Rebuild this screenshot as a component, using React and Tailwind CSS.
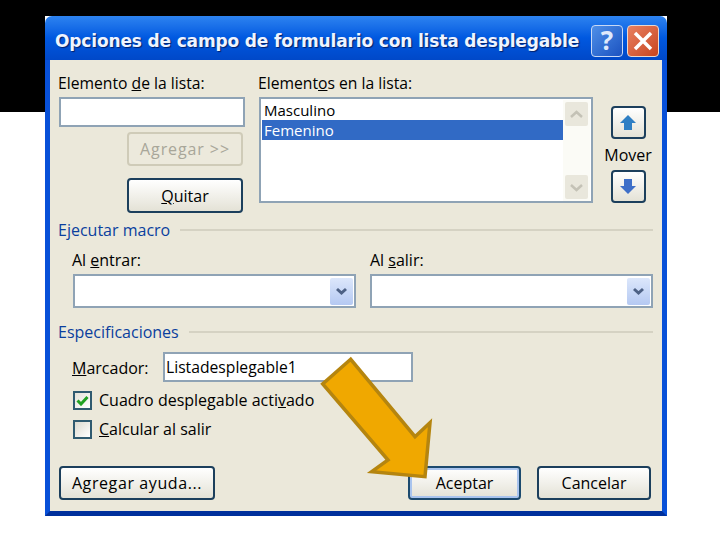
const FONT = "font-['Open_Sans','Liberation_Sans',sans-serif]";

function XpButton({ children, className = "", disabled = false, focused = false }) {
  return (
    <button
      className={`flex items-center justify-center rounded-[4px] border-2 text-[16px] ${
        disabled
          ? "border-[#cfcbb8] bg-[#ece9dc] text-[#a8a699]"
          : focused
            ? "border-[#1c4a6e] bg-gradient-to-b from-white to-[#e4e2d6] text-black shadow-[inset_0_0_0_2px_#a9c4ee]"
            : "border-[#1c3f5c] bg-gradient-to-b from-white to-[#e4e2d6] text-black"
      } ${className}`}
    >
      {children}
    </button>
  );
}

function SectionTitle({ children }) {
  return (
    <div className="flex h-[20px] items-center gap-[10px] pr-[9px]">
      <span className="text-[16px] text-[#0a3f9e]">{children}</span>
      <span className="h-[2px] flex-1 bg-[#d5d2c3]" />
    </div>
  );
}

function Combo({ className = "" }) {
  return (
    <div className={`flex h-[34px] w-[283px] items-center justify-end border-2 border-[#8fa3b5] bg-white pr-[1px] ${className}`}>
      <span className="flex h-[27px] w-[23px] items-center justify-center rounded-[2px] bg-gradient-to-b from-[#dce7fb] to-[#b5c9f2]">
        <svg width="13" height="9" viewBox="0 0 13 9">
          <path d="M2 2 L6.5 6 L11 2" fill="none" stroke="#4d6185" strokeWidth="3" />
        </svg>
      </span>
    </div>
  );
}

function ScrollBtn({ up }) {
  return (
    <span className="flex h-[24px] w-[23px] items-center justify-center rounded-[2px] bg-[#e9e7dc]">
      <svg width="15" height="9" viewBox="0 0 15 9">
        <path d={up ? "M2 7 L7.5 2 L13 7" : "M2 2 L7.5 7 L13 2"} fill="none" stroke="#c4c2b6" strokeWidth="2.5" />
      </svg>
    </span>
  );
}

function MoveButton({ up }) {
  return (
    <button className="flex h-[33px] w-[35px] shrink-0 items-center justify-center rounded-[4px] border-2 border-[#1c3f5c] bg-gradient-to-b from-white to-[#e4e2d6]">
      <svg width="18" height="17" viewBox="0 0 18 17">
        <path
          d={up ? "M9 1 L17 9 H13 V16 H5 V9 H1 Z" : "M5 1 H13 V8 H17 L9 16 L1 8 H5 Z"}
          fill={up ? "#2f7fc4" : "#3e6fc8"}
        />
      </svg>
    </button>
  );
}

export default function App() {
  return (
    <div className={`relative h-[540px] w-[720px] overflow-hidden bg-white pl-[45px] pt-[16px] ${FONT}`}>
      <div className="absolute inset-x-0 top-0 h-[112px] bg-black" />

      <div className="relative h-[500px] w-[622px] bg-white">
        {/* Title bar */}
        <div className="flex h-[44px] items-center rounded-t-[7px] bg-gradient-to-b from-[#2d83f0] via-[#0058e0] to-[#0048c8] pl-[10px] pr-[8px] pt-[5px]">
          <span className="min-w-0 flex-1 whitespace-nowrap pt-[3px] font-['DejaVu_Sans'] text-[17px] font-bold tracking-[-0.15px] text-[#eef4ff] [text-shadow:1px_1px_1px_#00206a]">
            Opciones de campo de formulario con lista desplegable
          </span>
          <span className="mr-[4px] flex h-[32px] w-[32px] shrink-0 items-center justify-center rounded-[4px] border border-[#c8d8f5] bg-gradient-to-br from-[#4f8fe8] to-[#1c52c0] text-[26px] font-bold text-[#dfe9fb]">
            ?
          </span>
          <span className="flex h-[32px] w-[32px] shrink-0 items-center justify-center rounded-[4px] border border-[#e8d8d0] bg-gradient-to-br from-[#e88060] to-[#c8441c]">
            <svg width="22" height="22" viewBox="0 0 22 22">
              <path d="M3 3 L19 19 M19 3 L3 19" stroke="#fff" strokeWidth="3.5" />
            </svg>
          </span>
        </div>

        {/* Client area */}
        <div className="h-[456px] border-x-[5px] border-b-[5px] border-x-[#0850d8] border-b-[#00309c] bg-[#ebe8da] pl-[8px] pt-[14px] text-[16px] text-black">
          <div className="flex h-[143px]">
            <div className="w-[200px]">
              <div className="h-[23px] text-[15.7px] leading-[18px]">Elemento <u>d</u>e la lista:</div>
              <div className="ml-[1px] h-[30px] w-[186px] border-2 border-[#8fa3b5] bg-white" />
              <XpButton disabled className="ml-[69px] mt-[5px] h-[34px] w-[116px] tracking-[0.9px]">Agregar &gt;&gt;</XpButton>
              <XpButton className="ml-[69px] mt-[12px] h-[35px] w-[116px]"><u>Q</u>uitar</XpButton>
            </div>

            <div className="w-[347px]">
              <div className="h-[23px] text-[15.7px] leading-[18px]">Elemen<span>t</span><u>o</u>s en la lista:</div>
              <div className="ml-[1px] flex h-[106px] w-[334px] border-2 border-[#8fa3b5] bg-white pl-[1px] pt-[1px]">
                <div className="w-[301px] text-[15px] leading-[20px]">
                  <div className="h-[20px] pl-[2px]">Masculino</div>
                  <div className="h-[20px] bg-[#316ac5] pl-[2px] text-white">Femenino</div>
                </div>
                <div className="flex w-[27px] flex-col justify-between bg-[#fbfbf6] px-[2px] py-[2px]">
                  <ScrollBtn up />
                  <ScrollBtn />
                </div>
              </div>
            </div>

            <div className="flex w-[46px] flex-col items-center pt-[32px]">
              <MoveButton up />
              <div className="flex h-[31px] items-center">Mover</div>
              <MoveButton />
            </div>
          </div>

          <div className="mt-[3px]"><SectionTitle>Ejecutar macro</SectionTitle></div>

          <div className="mt-[10px] flex pl-[14px]">
            <div className="w-[298px]">
              <div className="h-[24px] leading-[20px]">Al <u>e</u>ntrar:</div>
              <Combo className="ml-[1px]" />
            </div>
            <div>
              <div className="h-[24px] leading-[20px]">Al <u>s</u>alir:</div>
              <Combo />
            </div>
          </div>

          <div className="mt-[14px]"><SectionTitle>Especificaciones</SectionTitle></div>

          <div className="mt-[10px] flex h-[30px] items-center pl-[14px]">
            <span className="w-[91px] pt-[2px]"><u>M</u>arcador:</span>
            <div className="flex h-[30px] w-[250px] items-center border-2 border-[#8fa3b5] bg-white pl-[1px] pt-[2px] text-[15.7px]">Listadesplegable1</div>
          </div>

          <div className="ml-[15px] mt-[8px] flex h-[20px] items-center gap-[7px]">
            <span className="flex h-[19px] w-[19px] items-center justify-center border-2 border-[#2f5a70] bg-gradient-to-br from-[#e4e2d8] to-white">
              <svg width="13" height="11" viewBox="0 0 13 11">
                <path d="M1.5 5.5 L5 9 L11.5 2" fill="none" stroke="#21a121" strokeWidth="3" />
              </svg>
            </span>
            <span>Cuadro desplegable acti<u>v</u>ado</span>
          </div>
          <div className="ml-[15px] mt-[9px] flex h-[20px] items-center gap-[7px]">
            <span className="h-[19px] w-[19px] border-2 border-[#2f5a70] bg-gradient-to-br from-[#dcdad0] to-white" />
            <span><u>C</u>alcular al salir</span>
          </div>

          <div className="mt-[27px] flex pl-[1px]">
            <XpButton className="h-[34px] w-[156px] tracking-[0.6px]">A<u>g</u>regar ayuda...</XpButton>
            <XpButton focused className="ml-[193px] h-[34px] w-[113px]">Aceptar</XpButton>
            <XpButton className="ml-[16px] h-[34px] w-[114px]">Cancelar</XpButton>
          </div>
        </div>
      </div>

      {/* Callout arrow over the dialog */}
      <svg className="absolute left-0 top-0" width="720" height="540" viewBox="0 0 720 540">
        <path
          d="M350.7 359.3 L322.7 384 L388 460 L371.7 471.7 L425 476.7 L430 422.7 L415 436.7 Z"
          fill="#f0a800"
          stroke="#b5850f"
          strokeWidth="3.5"
          strokeLinejoin="miter"
        />
      </svg>
    </div>
  );
}
